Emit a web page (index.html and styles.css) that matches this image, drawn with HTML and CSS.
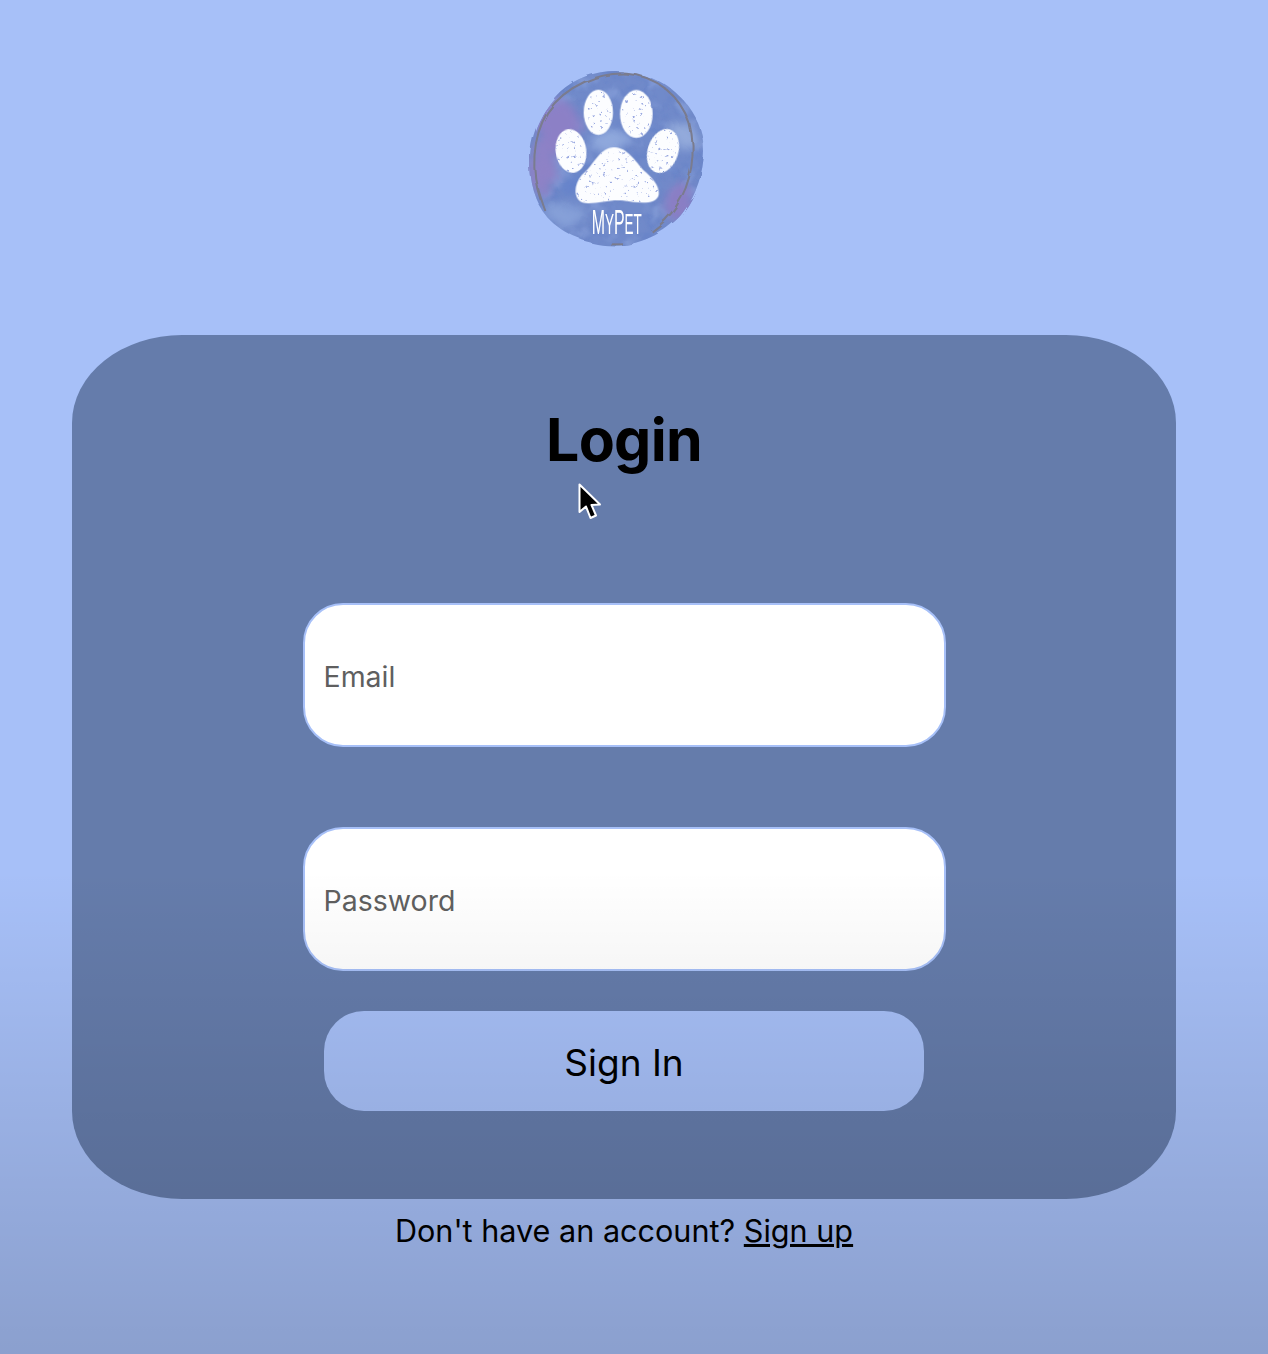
FILE: index.html
```html
<!DOCTYPE html>
<html lang="en">
<head>
    <meta charset="UTF-8">
    <meta name="viewport" content="width=device-width, initial-scale=1.0">
    <title>MyPet Login</title>
    <link rel="stylesheet" href="styles.css">
</head>
<body>
    <div class="page">
        <svg class="logo" viewBox="27 0 630 615" role="img" aria-label="MyPet logo">
            <defs>
                <filter id="rough" x="-10%" y="-10%" width="120%" height="120%">
                    <feTurbulence type="fractalNoise" baseFrequency="0.012" numOctaves="2" seed="4"/>
                    <feDisplacementMap in="SourceGraphic" scale="22"/>
                </filter>
                <filter id="ring" x="-10%" y="-10%" width="120%" height="120%">
                    <feTurbulence type="fractalNoise" baseFrequency="0.02" numOctaves="2" seed="9"/>
                    <feDisplacementMap in="SourceGraphic" scale="10"/>
                </filter>
                <filter id="wash" x="-30%" y="-30%" width="160%" height="160%" color-interpolation-filters="sRGB">
                    <feTurbulence type="fractalNoise" baseFrequency="0.02" numOctaves="3" seed="12"/>
                    <feDisplacementMap in="SourceGraphic" scale="60"/>
                    <feGaussianBlur stdDeviation="12"/>
                </filter>
                <filter id="mottle-light" color-interpolation-filters="sRGB">
                    <feTurbulence type="fractalNoise" baseFrequency="0.018" numOctaves="3" seed="21"/>
                    <feColorMatrix type="matrix" values="0 0 0 0 0.6  0 0 0 0 0.69  0 0 0 0 0.9  4 0 0 0 -2"/>
                    <feGaussianBlur stdDeviation="3"/>
                </filter>
                <filter id="mottle-dark" color-interpolation-filters="sRGB">
                    <feTurbulence type="fractalNoise" baseFrequency="0.025" numOctaves="3" seed="33"/>
                    <feColorMatrix type="matrix" values="0 0 0 0 0.38  0 0 0 0 0.49  0 0 0 0 0.78  0 4 0 0 -2"/>
                    <feGaussianBlur stdDeviation="3"/>
                </filter>
                <filter id="chalk" x="-5%" y="-5%" width="110%" height="110%" color-interpolation-filters="sRGB">
                    <feTurbulence type="fractalNoise" baseFrequency="0.03" numOctaves="2" seed="9" result="warp"/>
                    <feDisplacementMap in="SourceGraphic" in2="warp" scale="6" result="shape"/>
                    <feTurbulence type="fractalNoise" baseFrequency="0.09" numOctaves="3" seed="5"/>
                    <feColorMatrix type="matrix" values="0 0 0 0 0.6  0 0 0 0 0.66  0 0 0 0 0.88  7 0 0 0 -4.55"/>
                    <feComposite in2="shape" operator="in" result="specks"/>
                    <feMerge>
                        <feMergeNode in="shape"/>
                        <feMergeNode in="specks"/>
                    </feMerge>
                </filter>
                <clipPath id="blot">
                    <path d="M318 48 C395 50 470 80 520 135 C555 175 582 230 582 290 C580 350 560 420 520 470 C480 525 400 568 320 572 C240 572 165 545 115 490 C75 445 58 380 60 310 C62 235 95 165 150 110 C195 70 255 48 318 48 Z"/>
                </clipPath>
            </defs>

            <g filter="url(#rough)">
                <g clip-path="url(#blot)">
                    <rect x="40" y="30" width="560" height="560" fill="#708aca"/>
                    <rect x="40" y="30" width="560" height="560" filter="url(#mottle-dark)" opacity="0.4"/>
                    <rect x="40" y="30" width="560" height="560" filter="url(#mottle-light)" opacity="0.4"/>
                    <g filter="url(#wash)">
                        <ellipse cx="140" cy="215" rx="65" ry="85" fill="#8c80c6"/>
                        <ellipse cx="95" cy="335" rx="40" ry="80" fill="#8e82c6"/>
                        <ellipse cx="505" cy="440" rx="45" ry="60" fill="#8a7ec4"/>
                        <ellipse cx="300" cy="260" rx="60" ry="35" fill="#8fa8dc"/>
                        <ellipse cx="525" cy="240" rx="35" ry="45" fill="#93aadb"/>
                        <ellipse cx="170" cy="480" rx="50" ry="35" fill="#86a0d8"/>
                        <ellipse cx="190" cy="385" rx="45" ry="30" fill="#6583cb"/>
                    </g>
                </g>
            </g>

            <g fill="none" stroke="#7a7b8e" stroke-width="6" filter="url(#ring)">
                <path d="M92 435 C62 350 66 250 112 172 C170 88 270 52 350 56 C440 62 510 122 538 205 C560 290 545 385 498 455 C475 490 450 512 425 530"/>
                <path d="M84 400 C92 430 100 450 106 468"/>
                <path d="M304 571 L342 571"/>
            </g>

            <g fill="#fcfdff" filter="url(#chalk)">
                <ellipse cx="265" cy="172" rx="44" ry="68"/>
                <ellipse cx="379" cy="177" rx="49" ry="72"/>
                <ellipse cx="183" cy="288" rx="46" ry="66" transform="rotate(-8 183 288)"/>
                <ellipse cx="459" cy="288" rx="46" ry="68" transform="rotate(18 459 288)"/>
                <path d="M315 277 C350 277 378 320 400 345 C430 370 450 395 446 420 C438 448 395 446 340 437 C300 432 250 450 218 443 C190 432 190 390 215 360 C240 340 255 310 275 292 C290 280 300 277 315 277 Z"/>
            </g>

            <text class="logo-name" transform="translate(245 538) scale(0.46 1)">M<tspan class="logo-name-small">Y</tspan>P<tspan class="logo-name-small">ET</tspan></text>
        </svg>

        <main class="card">
            <h1>Login</h1>
            <form class="form">
                <input class="field" type="email" placeholder="Email">
                <input class="field" type="password" placeholder="Password">
                <button class="submit" type="button">Sign In</button>
            </form>
        </main>

        <p class="signup">Don't have an account? <a href="#">Sign up</a></p>
    </div>

    <div class="shade"></div>

    <svg class="cursor" viewBox="0 0 24 38">
        <path d="M1.5 1.5 L1.5 29 L8 23.5 L12.5 35 L18 32.5 L13.5 22 L22 21.5 Z" fill="#000" stroke="#fff" stroke-width="2" stroke-linejoin="round"/>
    </svg>
</body>
</html>
```

FILE: styles.css
```css
* {
    box-sizing: border-box;
}
html, body {
    margin: 0;
    height: 1354px;
}
body {
    position: relative;
    overflow: hidden;
    background-color: #a7c0f8;
    font-family: Inter, "Liberation Sans", sans-serif;
    color: #000;
}
.page {
    display: flex;
    flex-direction: column;
    align-items: center;
    padding: 55px 20px 0 0;
}
.logo {
    display: block;
    width: 210px;
    height: 205px;
    filter: blur(0.4px);
}
.logo-name {
    font-family: "Liberation Sans", sans-serif;
    font-size: 104px;
    fill: #fff;
}
.logo-name-small {
    font-size: 88px;
}
.card {
    width: 1104px;
    height: 864px;
    margin-top: 75px;
    padding-top: 69px;
    background-color: #657cab;
    border-radius: 110px / 88px;
}
h1 {
    margin: 0;
    font-size: 59px;
    line-height: 72px;
    font-weight: 700;
    letter-spacing: -0.7px;
    text-align: center;
}
.form {
    display: flex;
    flex-direction: column;
    align-items: center;
    margin-top: 127px;
}
.field {
    width: 643px;
    height: 144px;
    margin-bottom: 80px;
    padding: 2px 19px 0;
    background-color: #fff;
    border: 2px solid #a7c0f8;
    border-radius: 40px;
    font-family: inherit;
    font-size: 28.5px;
    outline: none;
}
.field::placeholder {
    color: #5f5f5f;
    opacity: 1;
}
.field:nth-child(2) {
    margin-bottom: 40px;
}
.submit {
    width: 600px;
    height: 100px;
    padding: 2px 0 0;
    background-color: #a7c0f8;
    border: none;
    border-radius: 40px;
    font-family: inherit;
    font-size: 37px;
    color: #000;
}
.signup {
    margin: 13px 0 0;
    font-size: 30.6px;
    line-height: 38px;
}
.signup a {
    color: #000;
}
.shade {
    position: absolute;
    left: 0;
    right: 0;
    top: 870px;
    bottom: 0;
    background: linear-gradient(to bottom, rgba(0, 0, 0, 0), rgba(0, 0, 0, 0.17));
    pointer-events: none;
}
.cursor {
    position: absolute;
    left: 578px;
    top: 483px;
    width: 24px;
    height: 38px;
}
```
